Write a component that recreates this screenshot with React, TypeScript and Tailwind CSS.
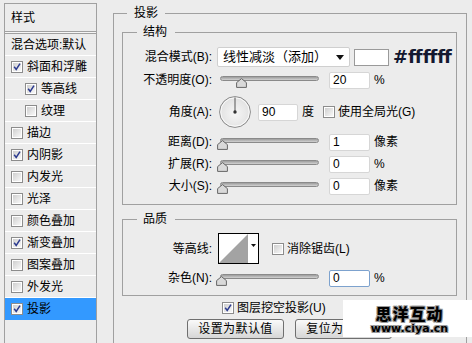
import React from "react";

function Check({ checked }: { checked: boolean }) {
  return (
    <svg width="12" height="12" viewBox="0 0 12 12" className="shrink-0 block">
      <defs>
        <linearGradient id="cbg" x1="0" y1="0" x2="1" y2="1">
          <stop offset="0" stopColor="#cfcfcf" />
          <stop offset="1" stopColor="#f8f8f8" />
        </linearGradient>
      </defs>
      <rect x="0.5" y="0.5" width="11" height="11" fill="#ffffff" stroke="#8c8c8c" />
      <rect x="2" y="2" width="8" height="8" fill="url(#cbg)" />
      {checked && (
        <path d="M3.2 5.8 L5.2 8.4 L9 2.6" stroke="#2b3a8f" strokeWidth="1.5" fill="none" />
      )}
    </svg>
  );
}

function Slider({ thumb }: { thumb: string }) {
  return (
    <div className="relative w-[99px] h-[20px] shrink-0">
      <div className="absolute left-0 right-0 top-[6px] h-[5px] rounded-full border border-[#8a8a8a] bg-gradient-to-b from-[#9c9c9c] to-[#d2d2d2]" />
      <svg className={`absolute top-[8px] ${thumb}`} width="11" height="10" viewBox="0 0 11 10">
        <path d="M5.5 0.6 L10.4 4.6 L10.4 9.4 L0.6 9.4 L0.6 4.6 Z" fill="#d9d9d9" stroke="#666666" />
      </svg>
    </div>
  );
}

function Field({ v, w, focus }: { v: string; w: string; focus?: boolean }) {
  return (
    <div
      className={`${w} h-[17px] shrink-0 bg-white rounded-[2px] border ${
        focus ? "border-[#7da2ce]" : "border-[#d6d6d6]"
      } pl-[3px] text-[12px] leading-[15px] text-black`}
    >
      {v}
    </div>
  );
}

function Label({ children }: { children: React.ReactNode }) {
  return <div className="w-[89px] shrink-0 text-right text-[12px] leading-[16px]">{children}</div>;
}

function SideRow({
  label,
  checked,
  indent,
  selected,
}: {
  label: string;
  checked: boolean;
  indent?: boolean;
  selected?: boolean;
}) {
  return (
    <div
      className={`h-[22px] shrink-0 flex items-center border-b ${
        selected ? "bg-[#3399ff] border-[#3399ff]" : "border-white"
      } ${indent ? "pl-[20px]" : "pl-[6px]"}`}
    >
      <Check checked={checked} />
      <span className="ml-[4px] text-[12px] leading-[16px] text-black">{label}</span>
    </div>
  );
}

export default function App() {
  return (
    <div className="relative w-[472px] h-[343px] overflow-hidden bg-[#ececec] flex items-start text-black font-['Liberation_Sans','Noto_Sans_CJK_SC',sans-serif]">
      {/* Left style list */}
      <div className="ml-[4px] mt-[3px] w-[93px] h-[345px] shrink-0 border border-[#a0a0a0] flex flex-col">
        <div className="h-[28px] shrink-0 border-b border-[#a0a0a0] pl-[6px] flex items-center text-[12px] leading-[16px]">
          样式
        </div>
        <div className="h-[1px] shrink-0 bg-[#f6f6f6]" />
        <div className="h-[23px] shrink-0 border-t border-[#a0a0a0] border-b border-b-white pl-[6px] flex items-center text-[12px] leading-[16px]">
          混合选项:默认
        </div>
        <SideRow label="斜面和浮雕" checked />
        <SideRow label="等高线" checked indent />
        <SideRow label="纹理" checked={false} indent />
        <SideRow label="描边" checked={false} />
        <SideRow label="内阴影" checked />
        <SideRow label="内发光" checked={false} />
        <SideRow label="光泽" checked={false} />
        <SideRow label="颜色叠加" checked={false} />
        <SideRow label="渐变叠加" checked />
        <SideRow label="图案叠加" checked={false} />
        <SideRow label="外发光" checked={false} />
        <SideRow label="投影" checked selected />
      </div>

      {/* Main group 投影 */}
      <div className="relative ml-[16px] mt-[13px] w-[354px] h-[340px] shrink-0 border border-[#a0a0a0] flex flex-col">
        <div className="absolute -top-[9px] left-[13px] pl-[7px] pr-[7px] bg-[#ececec] text-[12px] leading-[16px]">
          投影
        </div>

        {/* 结构 */}
        <div className="relative ml-[8px] mt-[18px] w-[335px] h-[173px] shrink-0 border border-[#a0a0a0] flex flex-col">
          <div className="absolute -top-[9px] left-[14px] pl-[6px] pr-[8px] bg-[#ececec] text-[12px] leading-[16px]">
            结构
          </div>

          <div className="mt-[14px] h-[20px] flex items-center">
            <Label>混合模式(B):</Label>
            <div className="ml-[5px] w-[133px] h-[20px] shrink-0 bg-white border border-[#cfcfcf] rounded-[2px] flex items-center pl-[5px] pr-[5px]">
              <span className="flex-1 text-[13px] leading-[16px]">线性减淡（添加）</span>
              <svg width="8" height="5" viewBox="0 0 8 5" className="shrink-0">
                <path d="M0 0 L8 0 L4 5 Z" fill="#111" />
              </svg>
            </div>
            <div className="ml-[4px] w-[35px] h-[17px] shrink-0 bg-white border border-[#9a9a9a]" />
            <div className="ml-[4px] text-[18px] leading-[20px] font-bold text-[#141830] font-['DejaVu_Sans',sans-serif]">
              #ffffff
            </div>
          </div>

          <div className="mt-[3px] h-[20px] flex items-center">
            <Label>不透明度(O):</Label>
            <div className="ml-[8px]">
              <Slider thumb="left-[16px]" />
            </div>
            <div className="ml-[10px]">
              <Field v="20" w="w-[41px]" />
            </div>
            <span className="ml-[4px] text-[12px] leading-[16px]">%</span>
          </div>

          <div className="mt-[6px] h-[32px] flex items-center">
            <Label>角度(A):</Label>
            <svg className="ml-[7px] shrink-0" width="32" height="32" viewBox="0 0 32 32">
              <defs>
                <radialGradient id="dialg" cx="0.5" cy="0.55" r="0.6">
                  <stop offset="0" stopColor="#f6f6f6" />
                  <stop offset="1" stopColor="#dedede" />
                </radialGradient>
              </defs>
              <circle cx="16" cy="16" r="15.4" fill="url(#dialg)" stroke="#8a8a8a" />
              <circle cx="16" cy="16" r="14.2" fill="none" stroke="#ffffff" strokeWidth="0.8" />
              <line x1="16" y1="16" x2="16" y2="1.5" stroke="#555" strokeWidth="1" />
              <circle cx="16" cy="16" r="1.7" fill="#333" />
            </svg>
            <div className="ml-[7px]">
              <Field v="90" w="w-[40px]" />
            </div>
            <span className="ml-[4px] text-[12px] leading-[16px]">度</span>
            <div className="ml-[9px]">
              <Check checked={false} />
            </div>
            <span className="ml-[3px] text-[12px] leading-[16px]">使用全局光(G)</span>
          </div>

          <div className="mt-[4px] h-[20px] flex items-center">
            <Label>距离(D):</Label>
            <div className="ml-[8px]">
              <Slider thumb="-left-[3px]" />
            </div>
            <div className="ml-[10px]">
              <Field v="1" w="w-[41px]" />
            </div>
            <span className="ml-[4px] text-[12px] leading-[16px]">像素</span>
          </div>

          <div className="mt-[2px] h-[20px] flex items-center">
            <Label>扩展(R):</Label>
            <div className="ml-[8px]">
              <Slider thumb="-left-[3px]" />
            </div>
            <div className="ml-[10px]">
              <Field v="0" w="w-[41px]" />
            </div>
            <span className="ml-[4px] text-[12px] leading-[16px]">%</span>
          </div>

          <div className="mt-[2px] h-[20px] flex items-center">
            <Label>大小(S):</Label>
            <div className="ml-[8px]">
              <Slider thumb="-left-[3px]" />
            </div>
            <div className="ml-[10px]">
              <Field v="0" w="w-[41px]" />
            </div>
            <span className="ml-[4px] text-[12px] leading-[16px]">像素</span>
          </div>
        </div>

        {/* 品质 */}
        <div className="relative ml-[8px] mt-[14px] w-[335px] h-[77px] shrink-0 border border-[#a0a0a0] flex flex-col">
          <div className="absolute -top-[9px] left-[14px] pl-[6px] pr-[8px] bg-[#ececec] text-[12px] leading-[16px]">
            品质
          </div>

          <div className="mt-[13px] h-[31px] flex items-center">
            <Label>等高线:</Label>
            <div className="ml-[6px] w-[41px] h-[31px] shrink-0 border border-black bg-white flex">
              <svg width="29" height="29" viewBox="0 0 29 29" className="shrink-0 block">
                <polygon points="0,29 29,0 29,29" fill="#a3a3a3" />
              </svg>
              <div className="flex-1 flex items-start justify-center pt-[10px]">
                <svg width="5" height="3" viewBox="0 0 5 3">
                  <path d="M0 0 L5 0 L2.5 3 Z" fill="#111" />
                </svg>
              </div>
            </div>
            <div className="ml-[13px]">
              <Check checked={false} />
            </div>
            <span className="ml-[3px] text-[12px] leading-[16px]">消除锯齿(L)</span>
          </div>

          <div className="mt-[4px] h-[20px] flex items-center">
            <Label>杂色(N):</Label>
            <div className="ml-[8px]">
              <Slider thumb="-left-[4px]" />
            </div>
            <div className="ml-[10px]">
              <Field v="0" w="w-[41px]" focus />
            </div>
            <span className="ml-[4px] text-[12px] leading-[16px]">%</span>
          </div>
        </div>

        {/* bottom controls */}
        <div className="mt-[5px] h-[14px] flex items-center pl-[108px]">
          <Check checked />
          <span className="ml-[3px] text-[12px] leading-[16px]">图层挖空投影(U)</span>
        </div>
        <div className="mt-[4px] h-[20px] flex items-center pl-[73px]">
          <div className="w-[97px] h-[20px] shrink-0 rounded-[3px] border border-[#6f6f6f] bg-gradient-to-b from-[#fafafa] to-[#d6d6d6] flex items-center justify-center text-[12px] leading-[16px] tracking-[0.4px]">
            设置为默认值
          </div>
          <div className="ml-[11px] w-[97px] h-[20px] shrink-0 rounded-[3px] border border-[#6f6f6f] bg-gradient-to-b from-[#fafafa] to-[#d6d6d6] flex items-center justify-center text-[12px] leading-[16px] tracking-[0.4px]">
            复位为默认值
          </div>
        </div>
      </div>

      {/* watermark */}
      <div className="absolute left-[343px] top-[300px] w-[129px] h-[37px] bg-white flex flex-col items-center pt-[4px] pl-[4px]">
        <div className="text-[16px] leading-[18px] font-black text-black tracking-[1px] font-['Noto_Sans_CJK_SC',sans-serif] [text-shadow:1px_1px_0_#9a9a9a,-1px_-1px_0_#9a9a9a,1px_-1px_0_#9a9a9a,-1px_1px_0_#9a9a9a]">
          思洋互动
        </div>
        <div className="mt-[1px] text-[11px] leading-[11px] font-bold text-black font-['DejaVu_Sans',sans-serif] [text-shadow:1px_1px_0_#9a9a9a,-1px_-1px_0_#9a9a9a,1px_-1px_0_#9a9a9a,-1px_1px_0_#9a9a9a]">
          www.ciya.cn
        </div>
      </div>
    </div>
  );
}
